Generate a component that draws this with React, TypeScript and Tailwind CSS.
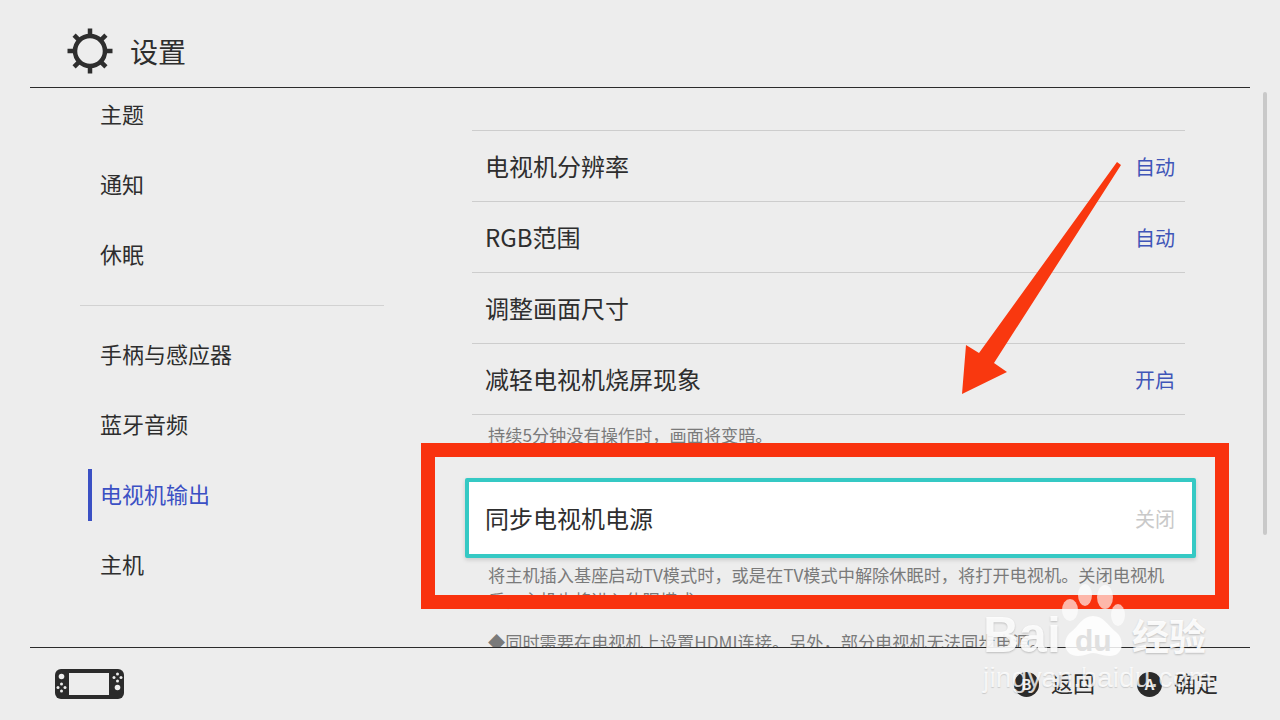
const font = { fontFamily: '"Noto Sans CJK SC", "Noto Sans", sans-serif' };

const sideTop = ['主题', '通知', '休眠'];
const sideBottom = ['手柄与感应器', '蓝牙音频', '电视机输出', '主机'];

function SideItem({ label, active }: { label: string; active?: boolean }) {
  return (
    <div className="flex h-[70px] items-center pl-2">
      <span className={`h-[52px] w-1 ${active ? 'bg-[#3b50c4]' : 'bg-transparent'}`} />
      <span className={`mb-1 ml-2 text-[22px] ${active ? 'text-[#3b50c4]' : 'text-[#2e2e2e]'}`}>{label}</span>
    </div>
  );
}

function Row({ label, value }: { label: string; value?: string }) {
  return (
    <div className="flex h-[71px] items-center justify-between border-t border-[#cdcdcd] pl-[13px] pr-[10px]">
      <span className="text-[24px] text-[#2e2e2e]">{label}</span>
      {value && <span className="mt-[2px] text-[20px] text-[#3f55b8]">{value}</span>}
    </div>
  );
}

function GearIcon() {
  const teeth = [0, 45, 90, 135, 180, 225, 270, 315];
  return (
    <svg width="48" height="48" viewBox="0 0 48 48">
      <circle cx="24" cy="24" r="15" fill="none" stroke="#2e2e2e" strokeWidth="4.5" />
      {teeth.map((a) => (
        <line key={a} x1="24" y1="9" x2="24" y2="1.5" stroke="#2e2e2e" strokeWidth="4.5" transform={`rotate(${a} 24 24)`} />
      ))}
    </svg>
  );
}

function ConsoleIcon() {
  return (
    <svg width="69" height="30" viewBox="0 0 69 30">
      <rect width="69" height="30" rx="6" fill="#2b2b2b" />
      <rect x="14" y="4" width="40" height="22" fill="#ededed" />
      <circle cx="6.5" cy="7.5" r="2.8" fill="#ededed" />
      <circle cx="62.5" cy="18.5" r="2.8" fill="#ededed" />
      {[[6.5, 15], [6.5, 22], [3, 18.5], [10, 18.5], [62.5, 5], [62.5, 12], [59, 8.5], [66, 8.5]].map(([x, y]) => (
        <circle key={`${x}-${y}`} cx={x} cy={y} r="1.5" fill="#ededed" />
      ))}
    </svg>
  );
}

function PadHint({ letter, label }: { letter: string; label: string }) {
  return (
    <div className="flex items-center gap-3">
      <span className="flex h-[25px] w-[25px] items-center justify-center rounded-full bg-[#2b2b2b] text-[15px] font-bold text-[#ededed]">
        {letter}
      </span>
      <span className="mb-1 text-[22px] text-[#2e2e2e]">{label}</span>
    </div>
  );
}

export default function App() {
  return (
    <div className="relative flex h-[720px] w-[1280px] flex-col overflow-hidden bg-[#ededed]" style={font}>
      <header className="mx-[30px] flex h-[88px] shrink-0 items-center gap-4 border-b border-[#2b2b2b] pl-[36px] pt-[14px]">
        <GearIcon />
        <h1 className="text-[28px] font-normal text-[#2e2e2e]">设置</h1>
      </header>

      <main className="flex h-[559px] shrink-0 overflow-hidden pl-20">
        <nav className="-mt-2 w-[304px] shrink-0">
          {sideTop.map((s) => (
            <SideItem key={s} label={s} />
          ))}
          <div className="flex h-[30px] items-center">
            <div className="h-px w-full bg-[#d2d2d2]" />
          </div>
          {sideBottom.map((s) => (
            <SideItem key={s} label={s} active={s === '电视机输出'} />
          ))}
        </nav>

        <section className="ml-[88px] mt-[42px] w-[713px] shrink-0">
          <Row label="电视机分辨率" value="自动" />
          <Row label="RGB范围" value="自动" />
          <Row label="调整画面尺寸" />
          <div className="border-b border-[#cdcdcd]">
            <Row label="减轻电视机烧屏现象" value="开启" />
          </div>
          <p className="mt-[6px] pl-4 text-[17.2px] leading-[28px] text-[#7a7a7a]">持续5分钟没有操作时，画面将变暗。</p>
          <div className="-ml-[7px] -mr-[11px] mt-[29px] flex h-[80px] items-center justify-between rounded-[2px] border-4 border-[#35c9c4] bg-white pl-[16px] pr-[17px] shadow-[0_2px_4px_rgba(0,0,0,0.15)]">
            <span className="text-[24px] text-[#2e2e2e]">同步电视机电源</span>
            <span className="mt-[2px] text-[20px] text-[#c9c9c9]">关闭</span>
          </div>
          <p className="mt-[4px] pl-4 pr-[16px] text-[17.2px] leading-[25px] text-[#7a7a7a]">
            将主机插入基座启动TV模式时，或是在TV模式中解除休眠时，将打开电视机。关闭电视机后，主机也将进入休眠模式。
          </p>
          <p className="mt-[17px] pl-4 text-[17.2px] leading-[25px] text-[#7a7a7a]">
            ◆同时需要在电视机上设置HDMI连接。另外，部分电视机无法同步电源。
          </p>
        </section>

        <div className="ml-[78px] mt-[4px] h-[443px] w-[4px] shrink-0 rounded-full bg-[#c9c9c9]" />
      </main>

      <footer className="mx-[30px] flex flex-1 items-center justify-between border-t border-[#2b2b2b] pl-[25px] pr-[32px]">
        <ConsoleIcon />
        <div className="flex items-center gap-[42px]">
          <PadHint letter="B" label="返回" />
          <PadHint letter="A" label="确定" />
        </div>
      </footer>

      {/* annotation layer */}
      <div className="absolute left-[421px] top-[443px] h-[166px] w-[808px] border-[14px] border-[#f9320e]" />
      <svg className="absolute left-0 top-0" width="1280" height="720" viewBox="0 0 1280 720">
        <polygon points="1117,162 1121,165 994,363 1007,372 962,394 966,345 979,353" fill="#f9380f" />
      </svg>

      {/* baidu watermark */}
      <svg className="absolute left-[1060px] top-[582px]" width="66" height="76" viewBox="0 0 66 76">
        <ellipse cx="25" cy="13" rx="7" ry="11" fill="#fff" opacity="0.65" />
        <ellipse cx="45" cy="15" rx="8" ry="12" fill="#fff" opacity="0.65" />
        <ellipse cx="10" cy="28" rx="8" ry="11" fill="#fff" opacity="0.65" />
        <ellipse cx="58" cy="33" rx="7" ry="11" fill="#fff" opacity="0.65" />
        <path d="M33 34 C22 34 19 44 11 50 C1 58 4 74 18 74 C26 74 28 71 33 71 C38 71 42 74 50 74 C64 74 65 57 56 50 C47 43 44 34 33 34 Z" fill="#fff" opacity="0.85" />
      </svg>
      <div className="absolute left-[983px] top-[605px] text-[50px] font-bold leading-[60px] text-white/90 [text-shadow:0_1px_2px_rgba(0,0,0,0.2)]" style={{ fontFamily: '"Liberation Sans", sans-serif' }}>
        Bai
      </div>
      <div className="absolute left-[1075px] top-[623px] text-[30px] font-bold leading-[36px] text-[#e0e0e0]" style={{ fontFamily: '"Liberation Sans", sans-serif' }}>
        du
      </div>
      <div className="absolute left-[1132px] top-[610px] text-[37px] font-bold leading-[50px] text-white/90 [text-shadow:0_1px_2px_rgba(0,0,0,0.2)]">经验</div>
      <div className="absolute left-[983px] top-[660px] text-[28px] leading-[36px] tracking-[0.2px] text-white/80 [text-shadow:0_1px_1px_rgba(0,0,0,0.15)]" style={{ fontFamily: '"Liberation Sans", sans-serif' }}>
        jingyan.baidu.com
      </div>
    </div>
  );
}
